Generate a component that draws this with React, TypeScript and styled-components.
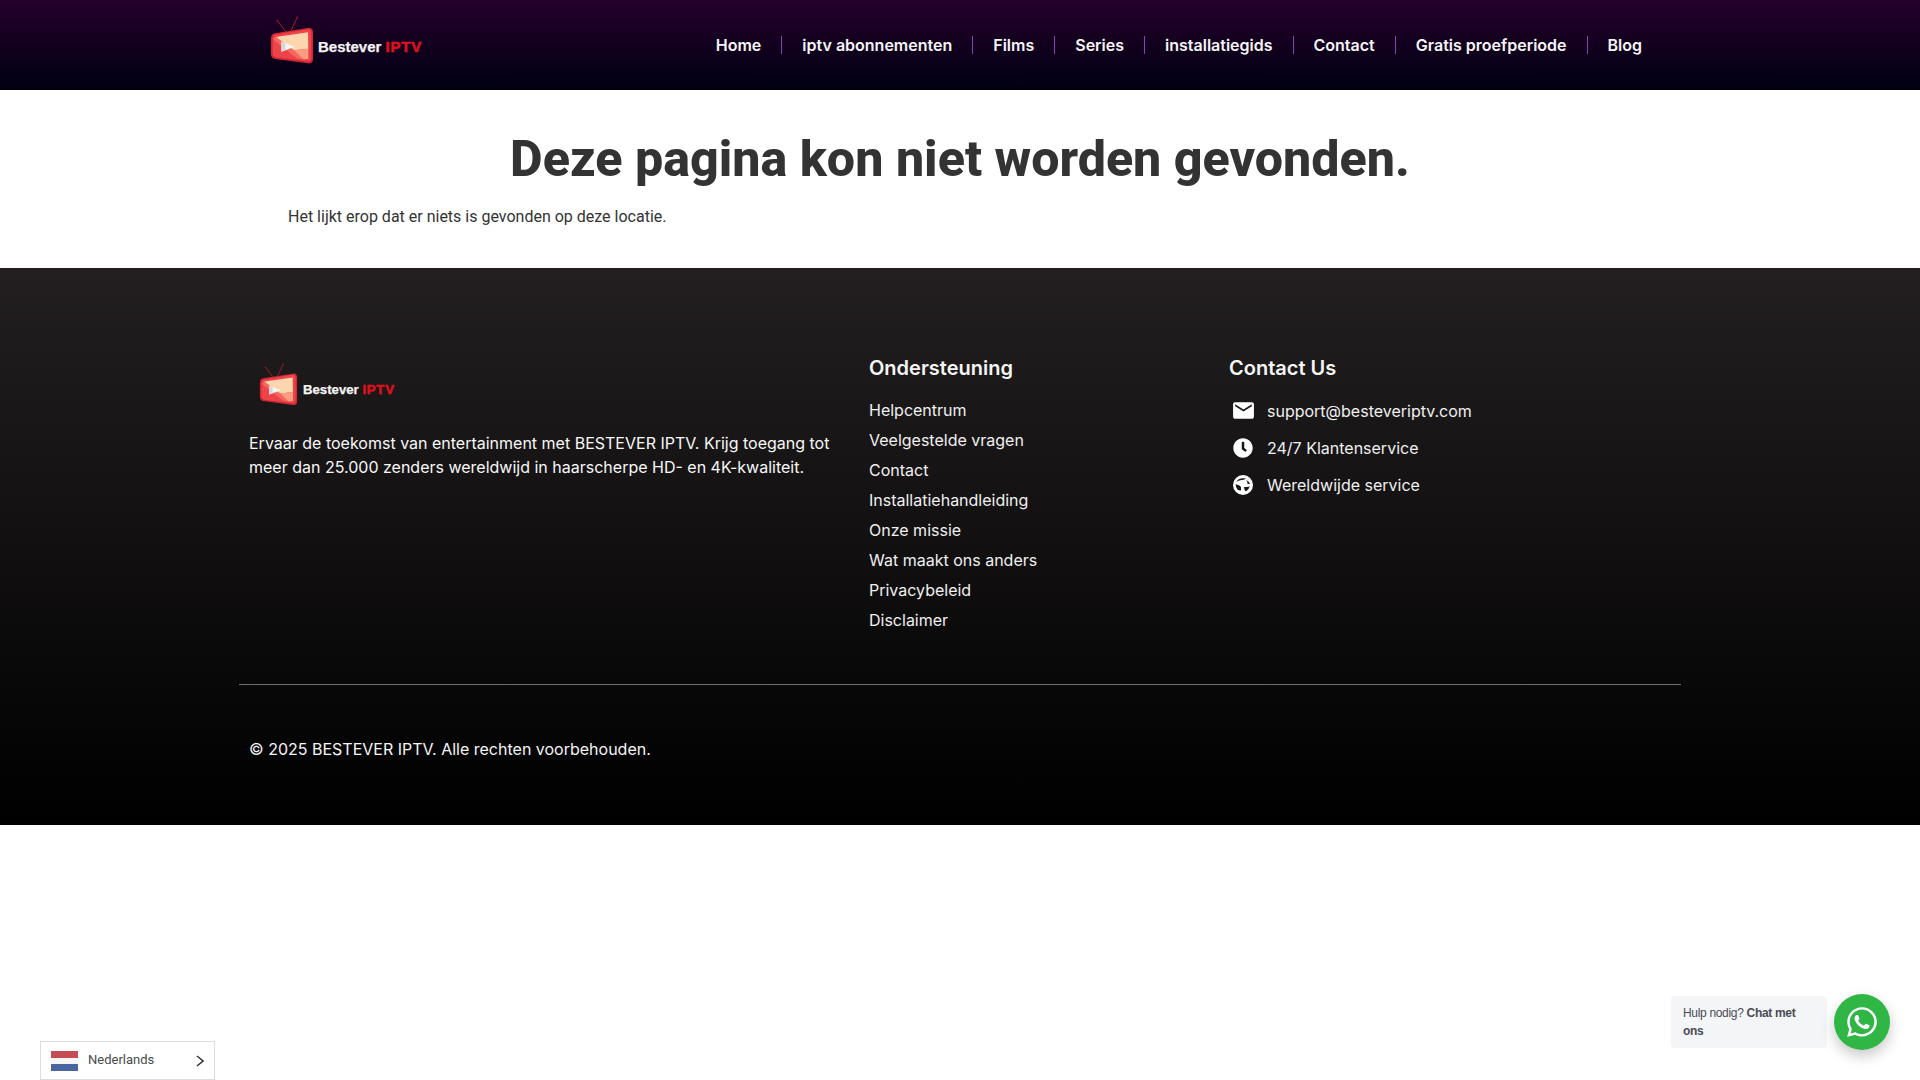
import React from "react";
import styled, { createGlobalStyle } from "styled-components";
import { MdEmail } from "react-icons/md";
import { FaClock, FaWhatsapp } from "react-icons/fa";

const Global = createGlobalStyle`
  html, body { margin: 0; padding: 0; background: #fff; }
  body { font-family: Inter, "Liberation Sans", sans-serif; height: 1080px; overflow: hidden; }
  * { box-sizing: border-box; }
`;

const Header = styled.header`
  height: 90px;
  background: linear-gradient(180deg, #24002a 0%, #000012 100%);
  display: flex;
  justify-content: center;
`;
const HeaderInner = styled.div`
  width: 1440px;
  display: flex;
  align-items: flex-start;
  justify-content: space-between;
  padding: 16px 18px 0 30px;
`;
const Nav = styled.nav`
  display: flex;
  align-items: center;
  height: 58px;
`;
const NavLink = styled.a<{ $first?: boolean }>`
  color: #f5f5f7;
  font-size: 16px;
  font-weight: 600;
  line-height: 18px;
  padding: 0 20px;
  border-left: ${(p) => (p.$first ? "none" : "1px solid #8e3fb8")};
`;

const LogoWrap = styled.div<{ $h: number; $gap: number }>`
  display: flex;
  align-items: center;
  gap: ${(p) => p.$gap}px;
  height: ${(p) => p.$h}px;
`;
const LogoText = styled.span<{ $size: number }>`
  font-family: "Liberation Sans", Arial, sans-serif;
  font-weight: 700;
  font-size: ${(p) => p.$size}px;
  color: #f4f4f4;
  white-space: nowrap;
  margin-top: ${(p) => Math.round(p.$size * 0.75)}px;
  -webkit-text-stroke: 0.25px currentColor;
`;
const LogoRed = styled.span`
  color: #e0101c;
  letter-spacing: 0.75px;
  -webkit-text-stroke: 0.5px currentColor;
`;

function Tv({ w }: { w: number }) {
  return (
    <svg width={w} height={(w * 146) / 132} viewBox="90 48 132 146">
      <path d="M112 62 L138 96 M172 52 L152 94" stroke="#a5182d" strokeWidth="3" fill="none" />
      <circle cx="112" cy="62" r="2.5" fill="#a5182d" />
      <circle cx="172" cy="52" r="2.5" fill="#a5182d" />
      <path d="M104 100 L204 84 Q219 82 219 97 L219 178 Q219 192 204 190 L106 177 Q93 175 93 162 L93 116 Q93 102 104 100 Z" fill="#cf2734" />
      <path d="M106 104 L203 88 Q214 87 214 98 L214 174 Q214 186 202 184 L108 172 Q98 171 98 160 L98 116 Q98 106 106 104 Z" fill="#ee4349" />
      <path d="M99 118 L108 111 L162 151 L190 178 L172 176 Z" fill="#f6685f" />
      <path d="M108 111 L204 97 L205 146 L162 151 Z" fill="#fdd5ae" />
      <path d="M162 151 L205 146 L205 177 L190 178 Z" fill="#fb9d80" />
      <path d="M124 125 L165 140 L124 155 Z" fill="#f4f4f1" />
      <path d="M124 125 L136 129 L136 151 L124 155 Z" fill="#d8d8d6" />
    </svg>
  );
}

function GlobeIcon() {
  return (
    <svg width="20" height="20" viewBox="0 0 20 20">
      <circle cx="10" cy="10" r="10" fill="#fff" />
      <path d="M3 7 Q6 2 13 3.5 Q11 5 8.5 5 Q5 5.5 3 7 Z" fill="#1a1718" />
      <path d="M13 5 Q16 6 17 9 L14.5 9 Q15 7 13 5 Z" fill="#1a1718" />
      <path d="M2.5 9.5 Q6 9 8 12 L8 15.5 Q5 16 3.5 13 Z" fill="#1a1718" />
      <path d="M11 12 Q14 12 16.8 11.5 Q16 14 13 16.5 Q11 15 11 12 Z" fill="#1a1718" />
    </svg>
  );
}

function Logo({ tv, size, gap, h }: { tv: number; size: number; gap: number; h: number }) {
  return (
    <LogoWrap $h={h} $gap={gap}>
      <Tv w={tv} />
      <LogoText $size={size}>
        Bestever <LogoRed>IPTV</LogoRed>
      </LogoText>
    </LogoWrap>
  );
}

const Main = styled.main`
  height: 178px;
  width: 1440px;
  margin: 0 auto;
  padding: 0 48px;
  color: #333;
`;
const Title = styled.h1`
  margin: 0;
  padding-top: 38px;
  font-family: Roboto, sans-serif;
  font-size: 50.2px;
  font-weight: 800;
  line-height: 62px;
  text-align: center;
`;
const Lead = styled.p`
  margin: 15px 0 0;
  font-family: Roboto, sans-serif;
  font-size: 16px;
  line-height: 24px;
  color: #333;
`;

const Footer = styled.footer`
  height: 557px;
  background: linear-gradient(180deg, #231f20 0%, #000 100%);
  color: #fff;
  display: flex;
  justify-content: center;
`;
const FooterInner = styled.div`
  width: 1442px;
  padding-top: 87px;
`;
const Columns = styled.div`
  display: grid;
  grid-template-columns: 620px 360px 1fr;
  height: 330px;
  border-bottom: 1px solid #6e6e6e;
`;
const Col = styled.div`
  padding-left: 10px;
`;
const About = styled.p`
  margin: 25px 0 0;
  font-size: 16px;
  line-height: 24px;
  color: #f8f8f8;
  width: 590px;
`;
const LogoSlot = styled.div`
  padding: 8px 0 0 20px;
`;
const Heading = styled.h3<{ $mb: number }>`
  margin: 0 0 ${(p) => p.$mb}px;
  font-size: 20px;
  font-weight: 600;
  line-height: 26px;
  color: #f5f5f5;
`;
const LinkList = styled.ul`
  margin: 0;
  padding: 0;
  list-style: none;
`;
const LinkItem = styled.li`
  font-size: 16px;
  line-height: 30px;
  color: #f0f0f0;
`;
const ContactRow = styled.div`
  display: flex;
  align-items: center;
  gap: 10px;
  height: 37px;
  font-size: 16px;
  color: #f0f0f0;
`;
const IconBox = styled.span`
  width: 28px;
  height: 26px;
  display: flex;
  align-items: center;
  justify-content: center;
  color: #fff;
  flex: none;
`;
const Copy = styled.p`
  margin: 51px 0 0 10px;
  font-size: 16px;
  line-height: 26px;
  color: #f5f5f5;
`;

const LangBox = styled.div`
  position: fixed;
  left: 40px;
  top: 1041px;
  width: 175px;
  height: 39px;
  background: #fff;
  border: 1px solid #ddd;
  display: flex;
  align-items: center;
  padding: 0 10px;
  font-family: Roboto, sans-serif;
  font-size: 13px;
  color: #4a4a4a;
  gap: 10px;
`;
const LangName = styled.span`
  flex: 1;
  margin-bottom: 2px;
`;
const Flag = styled.svg`
  flex: none;
`;
const ChatWidget = styled.div`
  position: fixed;
  left: 1671px;
  top: 994px;
  display: flex;
  align-items: flex-start;
  gap: 7px;
`;
const Bubble = styled.div`
  width: 156px;
  height: 52px;
  background: #f4f5f7;
  border-radius: 4px;
  padding: 8px 12px;
  font-family: "Liberation Sans", Arial, sans-serif;
  font-size: 12px;
  letter-spacing: -0.32px;
  line-height: 18px;
  color: #4a4c55;
  margin-top: 2px;
`;
const ChatButton = styled.div`
  width: 56px;
  height: 56px;
  border-radius: 50%;
  background: #2fb645;
  color: #fff;
  display: flex;
  align-items: center;
  justify-content: center;
  box-shadow: 0 6px 14px rgba(0, 0, 0, 0.22);
`;

const links = ["Home", "iptv abonnementen", "Films", "Series", "installatiegids", "Contact", "Gratis proefperiode", "Blog"];
const support = ["Helpcentrum", "Veelgestelde vragen", "Contact", "Installatiehandleiding", "Onze missie", "Wat maakt ons anders", "Privacybeleid", "Disclaimer"];

export default function App() {
  return (
    <>
      <Global />
      <Header>
        <HeaderInner>
          <Logo tv={44} size={15} gap={4} h={49} />
          <Nav>
            {links.map((l, i) => (
              <NavLink key={l} $first={i === 0}>{l}</NavLink>
            ))}
          </Nav>
        </HeaderInner>
      </Header>
      <Main>
        <Title>Deze pagina kon niet worden gevonden.</Title>
        <Lead>Het lijkt erop dat er niets is gevonden op deze locatie.</Lead>
      </Main>
      <Footer>
        <FooterInner>
          <Columns>
            <div>
              <LogoSlot>
                <Logo tv={39} size={13.2} gap={5} h={43} />
              </LogoSlot>
              <Col>
                <About>Ervaar de toekomst van entertainment met BESTEVER IPTV. Krijg toegang tot meer dan 25.000 zenders wereldwijd in haarscherpe HD- en 4K-kwaliteit.</About>
              </Col>
            </div>
            <Col>
              <Heading $mb={14}>Ondersteuning</Heading>
              <LinkList>
                {support.map((s) => (
                  <LinkItem key={s}>{s}</LinkItem>
                ))}
              </LinkList>
            </Col>
            <Col>
              <Heading $mb={11}>Contact Us</Heading>
              <ContactRow><IconBox><MdEmail size={25} /></IconBox>support@besteveriptv.com</ContactRow>
              <ContactRow><IconBox><FaClock size={20} /></IconBox>24/7 Klantenservice</ContactRow>
              <ContactRow><IconBox><GlobeIcon /></IconBox>Wereldwijde service</ContactRow>
            </Col>
          </Columns>
          <Copy>© 2025 BESTEVER IPTV. Alle rechten voorbehouden.</Copy>
        </FooterInner>
      </Footer>
      <LangBox>
        <Flag width="27" height="20" viewBox="0 0 27 20">
          <rect width="27" height="7" fill="#c54b55" />
          <rect y="7" width="27" height="6" fill="#f6f4f4" />
          <rect y="13" width="27" height="7" fill="#4a66a0" />
        </Flag>
        <LangName>Nederlands</LangName>
        <svg width="10" height="12" viewBox="0 0 10 12"><path d="M3 1 L9 6 L3 11" stroke="#333" strokeWidth="1.5" fill="none" /></svg>
      </LangBox>
      <ChatWidget>
        <Bubble>Hulp nodig? <b>Chat met ons</b></Bubble>
        <ChatButton><FaWhatsapp size={34} /></ChatButton>
      </ChatWidget>
    </>
  );
}
